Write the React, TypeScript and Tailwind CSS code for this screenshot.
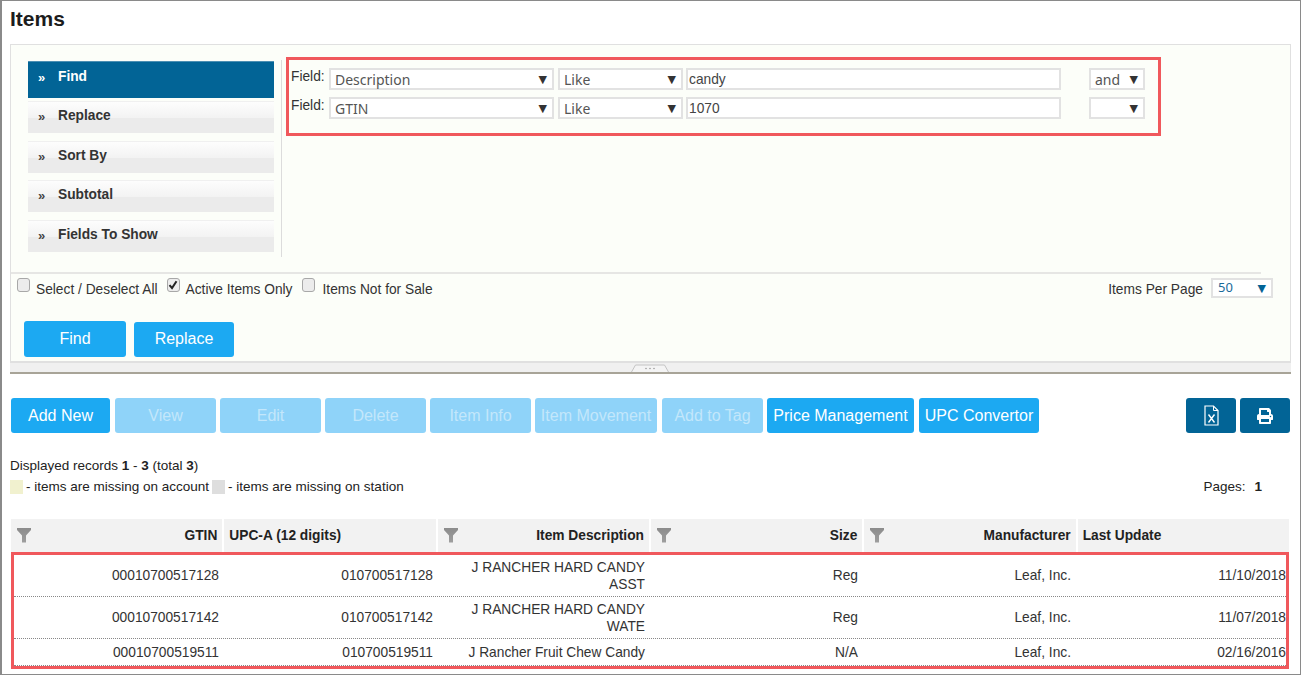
import React from "react";
import { FaPrint } from "react-icons/fa";

function Filter() {
  return (
    <svg width="14" height="15" viewBox="0 0 14 15" className="shrink-0 -mt-[2px]">
      <defs>
        <linearGradient id="fg" x1="0" y1="0" x2="0" y2="1">
          <stop offset="0" stopColor="#8c8c8c" />
          <stop offset="1" stopColor="#9e9e9e" />
        </linearGradient>
      </defs>
      <path d="M0 0H14V2L9 7.5V14.5L5 14.5V7.5L0 2Z" fill="url(#fg)" />
    </svg>
  );
}

function Select({ label, w }: { label: string; w: string }) {
  return (
    <div className={`${w} h-[22px] shrink-0 bg-white border-2 border-[#e2e2e2] flex items-center justify-between pl-[4px] pr-[5px] text-[14px] text-[#555] font-[Noto_Sans,sans-serif]`}>
      <span>{label}</span>
      <span className="text-[11px] leading-none font-[DejaVu_Sans,sans-serif] text-[#333]">▼</span>
    </div>
  );
}

function FieldRow({ f, op, val, join }: { f: string; op: string; val: string; join: string }) {
  return (
    <div className="flex items-start h-[29px]">
      <span className="w-[38px] mt-[1px] text-[13.75px] text-[#333] leading-[16px] shrink-0">Field:</span>
      <Select label={f} w="w-[225px]" />
      <div className="w-[4px] shrink-0" />
      <Select label={op} w="w-[125px]" />
      <div className="w-[3px] shrink-0" />
      <div className="w-[375px] h-[22px] shrink-0 bg-white border-2 border-[#e2e2e2] pl-[1px] pt-[2px] flex items-center text-[13.75px] text-[#444]">{val}</div>
      <div className="w-[28px] shrink-0" />
      <Select label={join} w="w-[56px]" />
    </div>
  );
}

function Acc({ label, active, mt }: { label: string; active?: boolean; mt: string }) {
  return (
    <div className={`${mt} w-[246px] flex items-start pl-[10px] font-bold text-[13.75px] ${active ? "h-[37px] bg-[#026496] text-white border-t border-[#4c8fb3] pt-[7px]" : "h-[32px] text-[#333] pt-[6px] border-t border-[#f0f0f0] bg-[linear-gradient(to_bottom,#fdfdfd_0%,#f3f3f3_50%,#ebebeb_52%,#ebebeb_100%)]"}`}>
      <span className={`w-[20px] text-[13px] leading-[18px] ${active ? "text-white" : "text-[#444]"}`}>»</span>
      <span className="leading-[16px]">{label}</span>
    </div>
  );
}

function Check({ checked }: { checked?: boolean }) {
  return (
    <span className="w-[13px] h-[14px] rounded-[3px] bg-[#ececec] border border-[#a8a8a8] shrink-0 flex items-center justify-center">
      {checked && (
        <svg width="10" height="10" viewBox="0 0 10 10">
          <path d="M1.5 5.2L4 8L8.5 1.2" fill="none" stroke="#222" strokeWidth="2" />
        </svg>
      )}
    </span>
  );
}

function Btn({ label, w, off, gap = "ml-[5px]" }: { label: string; w: string; off?: boolean; gap?: string }) {
  return (
    <button className={`${w} ${gap} h-[35px] rounded-[3px] text-[16px] shrink-0 whitespace-nowrap ${off ? "bg-[#8fd3f9] text-[#c3e7fb]" : "bg-[#1ca9f2] text-white"}`}>
      {label}
    </button>
  );
}

const rows = [
  { h: "h-[42px]", g: "00010700517128", u: "010700517128", d: ["J RANCHER HARD CANDY", "ASST"], s: "Reg", m: "Leaf, Inc.", l: "11/10/2018" },
  { h: "h-[42px]", g: "00010700517142", u: "010700517142", d: ["J RANCHER HARD CANDY", "WATE"], s: "Reg", m: "Leaf, Inc.", l: "11/07/2018" },
  { h: "h-[27px]", g: "00010700519511", u: "010700519511", d: ["J Rancher Fruit Chew Candy"], s: "N/A", m: "Leaf, Inc.", l: "02/16/2016" },
];

export default function App() {
  return (
    <div className="font-[Liberation_Sans,Arial,sans-serif] w-[1301px] h-[675px] bg-white border border-[#8a8a8a] border-l-2 overflow-hidden text-[#222]">
      <h1 className="ml-[8px] h-[43px] pt-[7px] text-[21px] leading-[22px] font-bold text-[#1c1c1c]">Items</h1>

      {/* search panel */}
      <section className="ml-[8px] mr-[9px] h-[319px] bg-[#fcfef9] border border-[#e0e0e0] border-b-2">
        <div className="h-[229px] flex items-start mr-[29px] border-b-2 border-[#e6e6e4]">
          <div className="ml-[17px] mt-[16px]">
            <Acc label="Find" active mt="mt-0" />
            <Acc label="Replace" mt="mt-[3px]" />
            <Acc label="Sort By" mt="mt-[8px]" />
            <Acc label="Subtotal" mt="mt-[7px]" />
            <Acc label="Fields To Show" mt="mt-[8px]" />
          </div>
          <div className="ml-[7px] mt-[15px] h-[197px] w-px bg-[#dcdcdc]" />
          <div className="ml-[4px] mt-[12px] w-[875px] h-[79px] border-[3px] border-[#f0585c] pt-[8px] pl-[2px]">
            <FieldRow f="Description" op="Like" val="candy" join="and" />
            <FieldRow f="GTIN" op="Like" val="1070" join="" />
          </div>
        </div>
        <div className="flex items-start h-[47px] pl-[6px] pr-[17px] text-[13.75px] text-[#333]">
          <div className="flex items-start mt-[4px]">
            <Check />
            <span className="ml-[6px] mt-[2px]">Select / Deselect All</span>
            <span className="w-[9px]" />
            <Check checked />
            <span className="ml-[6px] mt-[2px]">Active Items Only</span>
            <span className="w-[9px]" />
            <Check />
            <span className="ml-[8px] mt-[2px]">Items Not for Sale</span>
          </div>
          <div className="ml-auto flex items-start mt-[4px]">
            <span className="mt-[2px]">Items Per Page</span>
            <div className="ml-[8px]">
              <div className="w-[62px] h-[20px] bg-white border-2 border-[#e2e2e2] flex items-center justify-between pl-[5px] pr-[5px] text-[#1a6a9a] font-[Noto_Sans,sans-serif] text-[13px]">
                <span>50</span>
                <span className="text-[11px] leading-none text-[#026496] font-[DejaVu_Sans,sans-serif]">▼</span>
              </div>
            </div>
          </div>
        </div>
        <div className="flex items-start pl-[13px]">
          <Btn label="Find" w="w-[102px] h-[36px]" gap="ml-0" />
          <Btn label="Replace" w="w-[100px] pb-[2px]" gap="ml-[8px] mt-[1px]" />
        </div>
      </section>

      {/* splitter */}
      <div className="relative ml-[8px] mr-[9px] h-[11px] bg-[#f0f0f0] border-b-2 border-[#a8a498]">
        <svg width="38" height="8" viewBox="0 0 38 8" className="absolute left-[621px] top-[1px]">
          <path d="M0.5 8L4.5 1H33.5L37.5 8" fill="#f4f4f4" stroke="#c4c4c4" />
          <circle cx="15" cy="4.5" r="0.7" fill="#888" />
          <circle cx="19" cy="4.5" r="0.7" fill="#888" />
          <circle cx="23" cy="4.5" r="0.7" fill="#888" />
        </svg>
      </div>

      {/* toolbar */}
      <div className="mt-[24px] ml-[9px] flex items-start">
        <Btn label="Add New" w="w-[99px]" gap="ml-0" />
        <Btn label="View" w="w-[101px]" off />
        <Btn label="Edit" w="w-[101px]" off gap="ml-[4px]" />
        <Btn label="Delete" w="w-[101px]" off gap="ml-[4px]" />
        <Btn label="Item Info" w="w-[101px]" off gap="ml-[4px]" />
        <Btn label="Item Movement" w="w-[122px]" off gap="ml-[4px]" />
        <Btn label="Add to Tag" w="w-[101px]" off />
        <Btn label="Price Management" w="w-[147px]" gap="ml-[4px]" />
        <Btn label="UPC Convertor" w="w-[120px]" />
        <button className="ml-[147px] w-[50px] h-[35px] rounded-[3px] bg-[#026496] flex items-center justify-center">
          <svg width="15" height="21" viewBox="0 0 15 21">
            <path d="M1 1H9.5L14 5.5V20H1Z" fill="none" stroke="#fff" strokeWidth="1.2" />
            <path d="M9.5 1V5.5H14" fill="none" stroke="#fff" strokeWidth="1" />
            <path d="M4.5 9.5L10.5 17.5M10.5 9.5L4.5 17.5" fill="none" stroke="#fff" strokeWidth="1.4" />
          </svg>
        </button>
        <button className="ml-[4px] w-[50px] h-[35px] rounded-[3px] bg-[#026496] flex items-center justify-center text-white">
          <FaPrint size={16} />
        </button>
      </div>

      {/* summary */}
      <div className="ml-[8px] mr-[38px] mt-[25px] text-[13.5px] leading-[16px] text-[#222]">
        <div>
          Displayed records <b>1</b> - <b>3</b> (total <b>3</b>)
        </div>
        <div className="mt-[5px] flex items-center h-[16px]">
          <span className="w-[13px] h-[14px] bg-[#f1f1cf]" />
          <span className="ml-[3px]">- items are missing on account</span>
          <span className="ml-[3px] w-[13px] h-[14px] bg-[#dedede]" />
          <span className="ml-[3px]">- items are missing on station</span>
          <span className="ml-auto">Pages:</span>
          <b className="ml-[9px] font-bold">1</b>
        </div>
      </div>

      {/* table */}
      <div className="ml-[9px] mr-[11px] mt-[24px]">
        <div className="grid grid-cols-6 gap-x-[2px] h-[33px] text-[13.75px] font-bold text-[#222]">
          {[
            ["GTIN", true],
            ["UPC-A (12 digits)", false],
            ["Item Description", true],
            ["Size", true],
            ["Manufacturer", true],
            ["Last Update", false],
          ].map(([t, f]) => (
            <div key={t as string} className="bg-[#f2f2f2] flex items-center px-[5px] pt-[2px]">
              {f ? (
                <>
                  <span className="ml-[1px]"><Filter /></span>
                  <span className="ml-auto">{t}</span>
                </>
              ) : (
                <span>{t}</span>
              )}
            </div>
          ))}
        </div>
        <div className="border-[3px] border-[#f0585c] h-[117px]">
          {rows.map((r) => (
            <div key={r.g} className={`${r.h} grid grid-cols-[210px_213px_213px_213px_213px_1fr] border-b border-dotted border-[#888] text-[13.75px] leading-[17px] text-[#333] text-right items-center`}>
              <div className="pr-[5px]">{r.g}</div>
              <div className="pr-[4px]">{r.u}</div>
              <div className="pr-[5px]">
                {r.d.map((x) => (
                  <div key={x}>{x}</div>
                ))}
              </div>
              <div className="pr-[5px]">{r.s}</div>
              <div className="pr-[5px]">{r.m}</div>
              <div className="pr-0">{r.l}</div>
            </div>
          ))}
        </div>
      </div>
    </div>
  );
}
